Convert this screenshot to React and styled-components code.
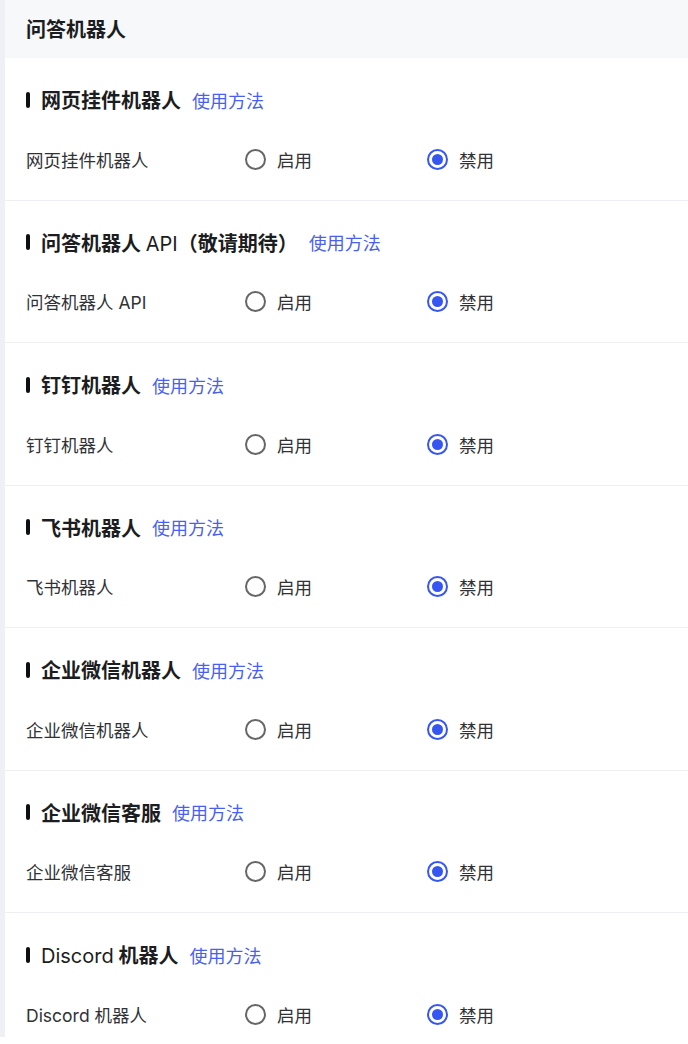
import styled, { createGlobalStyle } from 'styled-components';

const GlobalStyle = createGlobalStyle`
  html, body {
    margin: 0;
    padding: 0;
    background: #ffffff;
    overflow: hidden;
  }
  body {
    font-family: Inter, "Noto Sans CJK SC", sans-serif;
  }
`;

const Page = styled.div`
  display: flex;
  height: 1037px;
  overflow: hidden;
  background: #ffffff;
`;

const SideStrip = styled.div`
  width: 5px;
  flex-shrink: 0;
  background: #eef0f6;
`;

const Panel = styled.div`
  flex: 1;
  display: flex;
  flex-direction: column;
`;

const Header = styled.div`
  flex-shrink: 0;
  height: 58px;
  display: flex;
  align-items: center;
  padding: 0 21px;
  background: #f7f8fa;
`;

const PageTitle = styled.h1`
  margin: 0 0 2px;
  font-size: 20px;
  font-weight: 700;
  color: #1c1d21;
  font-family: "Noto Sans CJK SC", sans-serif;
`;

const Section = styled.section`
  flex-shrink: 0;
  padding: 27.5px 21px 29px;
  border-bottom: 1px solid #efeff3;
  display: flex;
  flex-direction: column;
  gap: 33px;
`;

const SectionHead = styled.div`
  display: flex;
  align-items: center;
  height: 28px;
`;

const Bar = styled.span`
  flex-shrink: 0;
  width: 4px;
  height: 16px;
  border-radius: 2px;
  background: #0e0f12;
  margin-right: 11px;
`;

const SectionTitle = styled.span`
  font-size: 20px;
  font-weight: 700;
  color: #1c1d21;
  margin-right: 11px;
  white-space: pre;
`;

const Latin = styled.span`
  font-family: Inter, sans-serif;
  font-weight: 400;
`;

const HelpLink = styled.a`
  font-size: 18px;
  color: #4a5ff2;
  text-decoration: none;
  cursor: pointer;
`;

const Row = styled.div`
  display: grid;
  grid-template-columns: 219px 182px auto;
  align-items: center;
  height: 24px;
`;

const Label = styled.span`
  font-size: 17.5px;
  color: #303236;
`;

const Option = styled.label`
  display: flex;
  align-items: center;
  gap: 11px;
  font-size: 17.5px;
  color: #303236;
  cursor: pointer;
`;

const Radio = styled.span`
  flex-shrink: 0;
  width: 21px;
  height: 21px;
  box-sizing: border-box;
  border-radius: 50%;
  border: 2px solid ${({ $checked }) => ($checked ? '#3656f2' : '#666666')};
  display: flex;
  align-items: center;
  justify-content: center;

  &::after {
    content: '';
    width: 11px;
    height: 11px;
    border-radius: 50%;
    background: #3656f2;
    display: ${({ $checked }) => ($checked ? 'block' : 'none')};
  }
`;

const bots = [
  { title: [['网页挂件机器人']], label: '网页挂件机器人' },
  { title: [['问答机器人 '], ['API', 'latin'], ['（敬请期待）']], label: '问答机器人 API' },
  { title: [['钉钉机器人']], label: '钉钉机器人' },
  { title: [['飞书机器人']], label: '飞书机器人' },
  { title: [['企业微信机器人']], label: '企业微信机器人' },
  { title: [['企业微信客服']], label: '企业微信客服' },
  { title: [['Discord', 'latin'], [' 机器人']], label: 'Discord 机器人' },
];

const renderTitle = (parts) =>
  parts.map(([text, kind], i) =>
    kind === 'latin' ? <Latin key={i}>{text}</Latin> : <span key={i}>{text}</span>
  );

export default function App() {
  return (
    <>
      <GlobalStyle />
      <Page>
        <SideStrip />
        <Panel>
          <Header>
            <PageTitle>问答机器人</PageTitle>
          </Header>
          {bots.map((bot) => (
            <Section key={bot.label}>
              <SectionHead>
                <Bar />
                <SectionTitle>{renderTitle(bot.title)}</SectionTitle>
                <HelpLink>使用方法</HelpLink>
              </SectionHead>
              <Row>
                <Label>{bot.label}</Label>
                <Option>
                  <Radio />
                  启用
                </Option>
                <Option>
                  <Radio $checked />
                  禁用
                </Option>
              </Row>
            </Section>
          ))}
        </Panel>
      </Page>
    </>
  );
}
